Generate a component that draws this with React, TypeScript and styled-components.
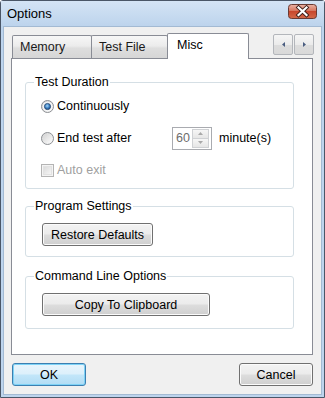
import React from "react";
import styled, { createGlobalStyle } from "styled-components";

const GlobalStyle = createGlobalStyle`
  html, body {
    margin: 0;
    padding: 0;
    background: #ffffff;
  }
  body {
    font-family: "Liberation Sans", Arial, sans-serif;
    font-size: 12.5px;
    color: #000;
  }
  * {
    box-sizing: border-box;
  }
`;

type TabProps = { $width: number; $active?: boolean };

const RadioGlyph = ({ checked }: { checked?: boolean }) => (
  <svg width="13" height="13" viewBox="0 0 13 13">
    <defs>
      <linearGradient id="radioRing" x1="0" y1="0" x2="1" y2="1">
        <stop offset="0" stopColor="#d2d2d2" />
        <stop offset="1" stopColor="#fdfdfd" />
      </linearGradient>
      <radialGradient id="radioDot" cx="0.45" cy="0.4" r="0.65">
        <stop offset="0" stopColor="#a6d8f8" />
        <stop offset="0.55" stopColor="#3a7ec2" />
        <stop offset="1" stopColor="#1b3f70" />
      </radialGradient>
    </defs>
    <circle cx="6.5" cy="6.5" r="6" fill="url(#radioRing)" stroke="#8c8f93" />
    {checked ? (
      <>
        <circle cx="6.5" cy="6.5" r="4.6" fill="#fbfbfb" />
        <circle cx="6.5" cy="6.5" r="3.1" fill="url(#radioDot)" stroke="#24466f" strokeWidth="0.8" />
      </>
    ) : (
      <circle cx="6.5" cy="6.5" r="4.4" fill="url(#radioRing)" opacity="0.7" />
    )}
  </svg>
);

const CheckGlyph = () => (
  <svg width="13" height="13" viewBox="0 0 13 13">
    <defs>
      <linearGradient id="checkFill" x1="0" y1="0" x2="1" y2="1">
        <stop offset="0" stopColor="#dadada" />
        <stop offset="1" stopColor="#f7f7f7" />
      </linearGradient>
    </defs>
    <rect x="0.5" y="0.5" width="12" height="12" fill="#f4f4f4" stroke="#b4b4b4" />
    <rect x="2.5" y="2.5" width="8" height="8" fill="url(#checkFill)" stroke="#e2e2e2" />
  </svg>
);

const Arrow = ({ dir, color }: { dir: "up" | "down" | "left" | "right"; color: string }) => {
  const pts = {
    up: "0,3 2.5,0 5,3",
    down: "0,0 2.5,3 5,0",
    left: "3,0 0,2.5 3,5",
    right: "0,0 3,2.5 0,5",
  }[dir];
  const vertical = dir === "up" || dir === "down";
  return (
    <svg width={vertical ? 5 : 3} height={vertical ? 3 : 5} viewBox={vertical ? "0 0 5 3" : "0 0 3 5"}>
      <polygon points={pts} fill={color} />
    </svg>
  );
};

const App = () => {
  return (
    <>
      <GlobalStyle />
      <StyledWindow>
        <StyledTitleBar>
          <div className="title">Options</div>
          <StyledClose>
            <svg width="29" height="15" viewBox="0 0 29 15">
              <defs>
                <linearGradient id="closeBg" x1="0" y1="0" x2="0" y2="1">
                  <stop offset="0" stopColor="#eab3a5" />
                  <stop offset="0.45" stopColor="#d7765f" />
                  <stop offset="0.5" stopColor="#c8472d" />
                  <stop offset="1" stopColor="#d46a4a" />
                </linearGradient>
              </defs>
              <rect x="0.5" y="0.5" width="28" height="14" rx="3" fill="url(#closeBg)" stroke="#6a3a33" />
              <path d="M10.5 3.5 L18.5 11 M18.5 3.5 L10.5 11" stroke="#3d1d18" strokeWidth="4" strokeLinecap="square" />
              <path d="M10.5 3.5 L18.5 11 M18.5 3.5 L10.5 11" stroke="#ffffff" strokeWidth="2.2" strokeLinecap="square" />
            </svg>
          </StyledClose>
        </StyledTitleBar>

        <StyledClient>
          <StyledTabStrip>
            <StyledTab $width={80}>Memory</StyledTab>
            <StyledTab $width={77}>Test File</StyledTab>
            <StyledTab $width={82} $active>
              Misc
            </StyledTab>
            <StyledScroller>
              <div className="btn">
                <Arrow dir="left" color="#4a5d80" />
              </div>
              <div className="btn">
                <Arrow dir="right" color="#4a5d80" />
              </div>
            </StyledScroller>
          </StyledTabStrip>

          <StyledPanel>
            <StyledGroup>
              <legend>Test Duration</legend>
              <StyledRow $height={32}>
                <StyledOption>
                  <RadioGlyph checked />
                  <span>Continuously</span>
                </StyledOption>
              </StyledRow>
              <StyledRow $height={32}>
                <StyledOption $width={131}>
                  <RadioGlyph />
                  <span>End test after</span>
                </StyledOption>
                <StyledSpin>
                  <div className="value">60</div>
                  <div className="buttons">
                    <div className="half">
                      <Arrow dir="up" color="#a8a8a8" />
                    </div>
                    <div className="half">
                      <Arrow dir="down" color="#a8a8a8" />
                    </div>
                  </div>
                </StyledSpin>
                <span className="unit">minute(s)</span>
              </StyledRow>
              <StyledRow $height={32}>
                <StyledOption $disabled>
                  <CheckGlyph />
                  <span>Auto exit</span>
                </StyledOption>
              </StyledRow>
            </StyledGroup>

            <StyledGroup $gap={10} $bottom={10}>
              <legend>Program Settings</legend>
              <StyledButtonRow>
                <StyledPushButton $width={111}>Restore Defaults</StyledPushButton>
              </StyledButtonRow>
            </StyledGroup>

            <StyledGroup $gap={12} $bottom={12}>
              <legend>Command Line Options</legend>
              <StyledButtonRow>
                <StyledPushButton $width={168}>Copy To Clipboard</StyledPushButton>
              </StyledButtonRow>
            </StyledGroup>
          </StyledPanel>

          <StyledFooter>
            <StyledPushButton $width={74} $default>
              OK
            </StyledPushButton>
            <StyledPushButton $width={74}>Cancel</StyledPushButton>
          </StyledFooter>
        </StyledClient>
      </StyledWindow>
    </>
  );
};

const StyledWindow = styled.div`
  width: 325px;
  height: 398px;
  border: 1px solid #4a5667;
  border-radius: 3px 3px 0 0;
  background: #bdd4ed;
  display: flex;
  flex-direction: column;
`;

const StyledTitleBar = styled.div`
  height: 26px;
  flex: 0 0 26px;
  display: flex;
  align-items: flex-start;
  background: linear-gradient(#d4e4f5, #bcd3ec);

  .title {
    font-size: 13px;
    line-height: 16px;
    margin: 5px 0 0 6px;
    color: #000;
  }
`;

const StyledClose = styled.div`
  margin: 3px 7px 0 auto;
  width: 29px;
  height: 15px;
  display: flex;
`;

const StyledClient = styled.div`
  flex: 1;
  margin: 0 3px 3px 3px;
  background: #f0f0f0;
  padding: 6px 8px 0 7px;
  display: flex;
  flex-direction: column;
  box-shadow: 0 0 0 1px #a3bad3;
`;

const StyledTabStrip = styled.div`
  height: 25px;
  flex: 0 0 25px;
  display: flex;
  align-items: flex-end;
  padding-left: 1px;
  position: relative;
  z-index: 1;
`;

const StyledTab = styled.div<TabProps>`
  width: ${(p) => p.$width}px;
  height: ${(p) => (p.$active ? 26 : 23)}px;
  margin-left: -1px;
  margin-bottom: ${(p) => (p.$active ? -1 : 0)}px;
  &:first-child {
    margin-left: 0;
  }
  padding: ${(p) => (p.$active ? "0 0 3px 9px" : "0 0 0 7px")};
  display: flex;
  align-items: center;
  border: 1px solid #898c95;
  border-bottom: none;
  border-radius: 2px 2px 0 0;
  background: ${(p) =>
    p.$active
      ? "#ffffff"
      : "linear-gradient(#f7f7f7 0%, #ececec 45%, #dedede 55%, #d6d6d6 100%)"};
  color: ${(p) => (p.$active ? "#000" : "#1a1a1a")};
  position: relative;
  z-index: ${(p) => (p.$active ? 2 : 1)};
`;

const StyledScroller = styled.div`
  margin-left: auto;
  margin-right: -1px;
  align-self: flex-start;
  margin-top: 1px;
  display: flex;
  gap: 1px;

  .btn {
    width: 20px;
    height: 21px;
    border: 1px solid #b3b6bb;
    border-radius: 2px;
    background: linear-gradient(#f5f5f5 0%, #ebebeb 50%, #dcdcdc 55%, #d9d9d9 100%);
    display: flex;
    align-items: center;
    justify-content: center;
  }
`;

const StyledPanel = styled.div`
  height: 297px;
  flex: 0 0 297px;
  border: 1px solid #898c95;
  background: #ffffff;
  padding: 16px 18px 0 13px;
  display: flex;
  flex-direction: column;
`;

const StyledGroup = styled.fieldset<{ $gap?: number; $bottom?: number }>`
  margin: ${(p) => p.$gap ?? 0}px 0 0 0;
  padding: 1px 0 ${(p) => p.$bottom ?? 2}px 8px;
  border: 1px solid #d5dfe5;
  border-radius: 3px;
  min-width: 0;

  legend {
    padding: 0 1px;
    line-height: 14px;
    color: #000;
  }
`;

const StyledRow = styled.div<{ $height: number }>`
  height: ${(p) => p.$height}px;
  display: flex;
  align-items: center;
  padding-left: 7px;

  .unit {
    margin-left: 7px;
  }
`;

const StyledOption = styled.div<{ $width?: number; $disabled?: boolean }>`
  display: flex;
  align-items: center;
  gap: 3px;
  width: ${(p) => (p.$width ? `${p.$width}px` : "auto")};
  color: ${(p) => (p.$disabled ? "#a0a0a0" : "#000")};

  svg {
    flex: 0 0 auto;
  }
`;

const StyledSpin = styled.div`
  width: 40px;
  height: 23px;
  border: 1px solid #a9abb0;
  background: #ffffff;
  display: flex;
  padding: 1px 2px 1px 0;

  .value {
    width: 19px;
    padding-left: 3px;
    overflow: hidden;
    white-space: nowrap;
    color: #6d6d6d;
    line-height: 19px;
  }

  .buttons {
    width: 17px;
    display: flex;
    flex-direction: column;
  }

  .half {
    flex: 1;
    border: 1px solid #cfd1d4;
    background: linear-gradient(#f6f6f6, #e6e6e6);
    display: flex;
    align-items: center;
    justify-content: center;
  }

  .half + .half {
    border-top: none;
  }
`;

const StyledButtonRow = styled.div`
  padding: 9px 0 0 8px;
  display: flex;
`;

const StyledPushButton = styled.div<{ $width: number; $default?: boolean }>`
  width: ${(p) => p.$width}px;
  height: 23px;
  border: 1px solid ${(p) => (p.$default ? "#3c7fb1" : "#707070")};
  border-radius: 3px;
  background: ${(p) =>
    p.$default
      ? "linear-gradient(#e9f5fc 0%, #dcf0fb 48%, #c2e6f9 52%, #b1dcf4 100%)"
      : "linear-gradient(#f3f3f3 0%, #ebebeb 48%, #dddddd 52%, #cfcfcf 100%)"};
  box-shadow: inset 0 0 0 1px ${(p) => (p.$default ? "#7dd2f6" : "#fbfbfb")};
  display: flex;
  align-items: center;
  justify-content: center;
  color: #000;
`;

const StyledFooter = styled.div`
  margin-top: 8px;
  padding-left: 1px;
  display: flex;
  justify-content: space-between;
`;

export default App;
